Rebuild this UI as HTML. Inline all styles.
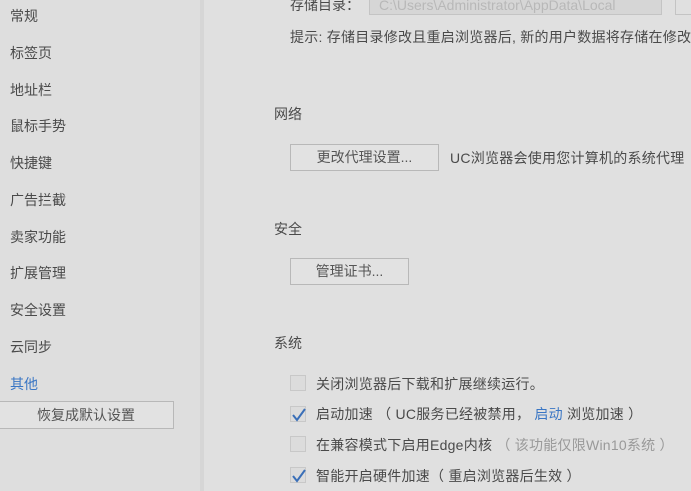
<!DOCTYPE html>
<html><head><meta charset="utf-8"><style>
body{margin:0;width:691px;height:491px;overflow:hidden;background:#e0e0e0;font-family:"Liberation Sans","Noto Sans CJK SC",sans-serif;font-size:14px;color:#4a4a4a;position:relative}
.a{position:absolute;white-space:nowrap;line-height:20px;margin-top:1px}
.c{letter-spacing:0.25px}
#side{position:absolute;left:0;top:0;width:200px;height:491px;background:#dedede}
#sep{position:absolute;left:200px;top:0;width:4px;height:491px;background:#d6d6d6}
.btn{position:absolute;border:1px solid #b8b8b8;background:#e2e2e2;box-sizing:border-box;text-align:center;color:#555}
.cb{position:absolute;left:290px;width:16px;height:16px;border:1px solid #c8c8c8;background:#dcdcdc;box-sizing:border-box}
</style></head><body>
<div id="side"></div><div id="sep"></div>
<div class="a" style="left:10px;top:5px">常规</div>
<div class="a" style="left:10px;top:42px">标签页</div>
<div class="a" style="left:10px;top:79px">地址栏</div>
<div class="a" style="left:10px;top:115px">鼠标手势</div>
<div class="a" style="left:10px;top:152px">快捷键</div>
<div class="a" style="left:10px;top:189px">广告拦截</div>
<div class="a" style="left:10px;top:226px">卖家功能</div>
<div class="a" style="left:10px;top:262px">扩展管理</div>
<div class="a" style="left:10px;top:299px">安全设置</div>
<div class="a" style="left:10px;top:336px">云同步</div>
<div class="a" style="left:10px;top:373px;color:#3a76c4">其他</div>
<div class="btn" style="left:-2px;top:401px;width:176px;height:28px;line-height:26px">恢复成默认设置</div>

<div class="a" style="left:290px;top:-6px">存储目录：</div>
<div style="position:absolute;left:369px;top:-5px;width:293px;height:20px;border:1px solid #c4c4c4;background:#d6d6d6;box-sizing:border-box"></div>
<div class="a" style="left:379px;top:-6px;color:#b8b8b8">C:\Users\Administrator\AppData\Local</div>
<div style="position:absolute;left:675px;top:-5px;width:30px;height:20px;border:1px solid #c4c4c4;box-sizing:border-box"></div>
<div class="a c" style="left:290px;top:26px">提示: 存储目录修改且重启浏览器后, 新的用户数据将存储在修改</div>
<div class="a" style="left:274px;top:103px">网络</div>
<div class="btn" style="left:290px;top:144px;width:149px;height:27px;line-height:25px">更改代理设置...</div>
<div class="a c" style="left:450px;top:147px">UC浏览器会使用您计算机的系统代理</div>
<div class="a" style="left:274px;top:218px">安全</div>
<div class="btn" style="left:290px;top:258px;width:119px;height:27px;line-height:25px">管理证书...</div>
<div class="a" style="left:274px;top:332px">系统</div>
<div class="cb" style="top:375px"></div>
<div class="a c" style="left:316px;top:373px">关闭浏览器后下载和扩展继续运行。</div>
<div class="cb" style="top:406px"></div>
<svg style="position:absolute;left:291px;top:405px" width="16" height="18"><path d="M2 10 L6 15 L14 4" stroke="#3a6fb8" stroke-width="2" fill="none"/></svg>
<div class="a c" style="left:316px;top:403px">启动加速 （ UC服务已经被禁用， <span style="color:#3a76c4">启动</span> 浏览加速 ）</div>
<div class="cb" style="top:436px"></div>
<div class="a c" style="left:316px;top:434px">在兼容模式下启用Edge内核 <span style="color:#999">（ 该功能仅限Win10系统 ）</span></div>
<div class="cb" style="top:467px"></div>
<svg style="position:absolute;left:291px;top:466px" width="16" height="18"><path d="M2 10 L6 15 L14 4" stroke="#3a6fb8" stroke-width="2" fill="none"/></svg>
<div class="a c" style="left:316px;top:465px">智能开启硬件加速（ 重启浏览器后生效 ）</div>
</body></html>
